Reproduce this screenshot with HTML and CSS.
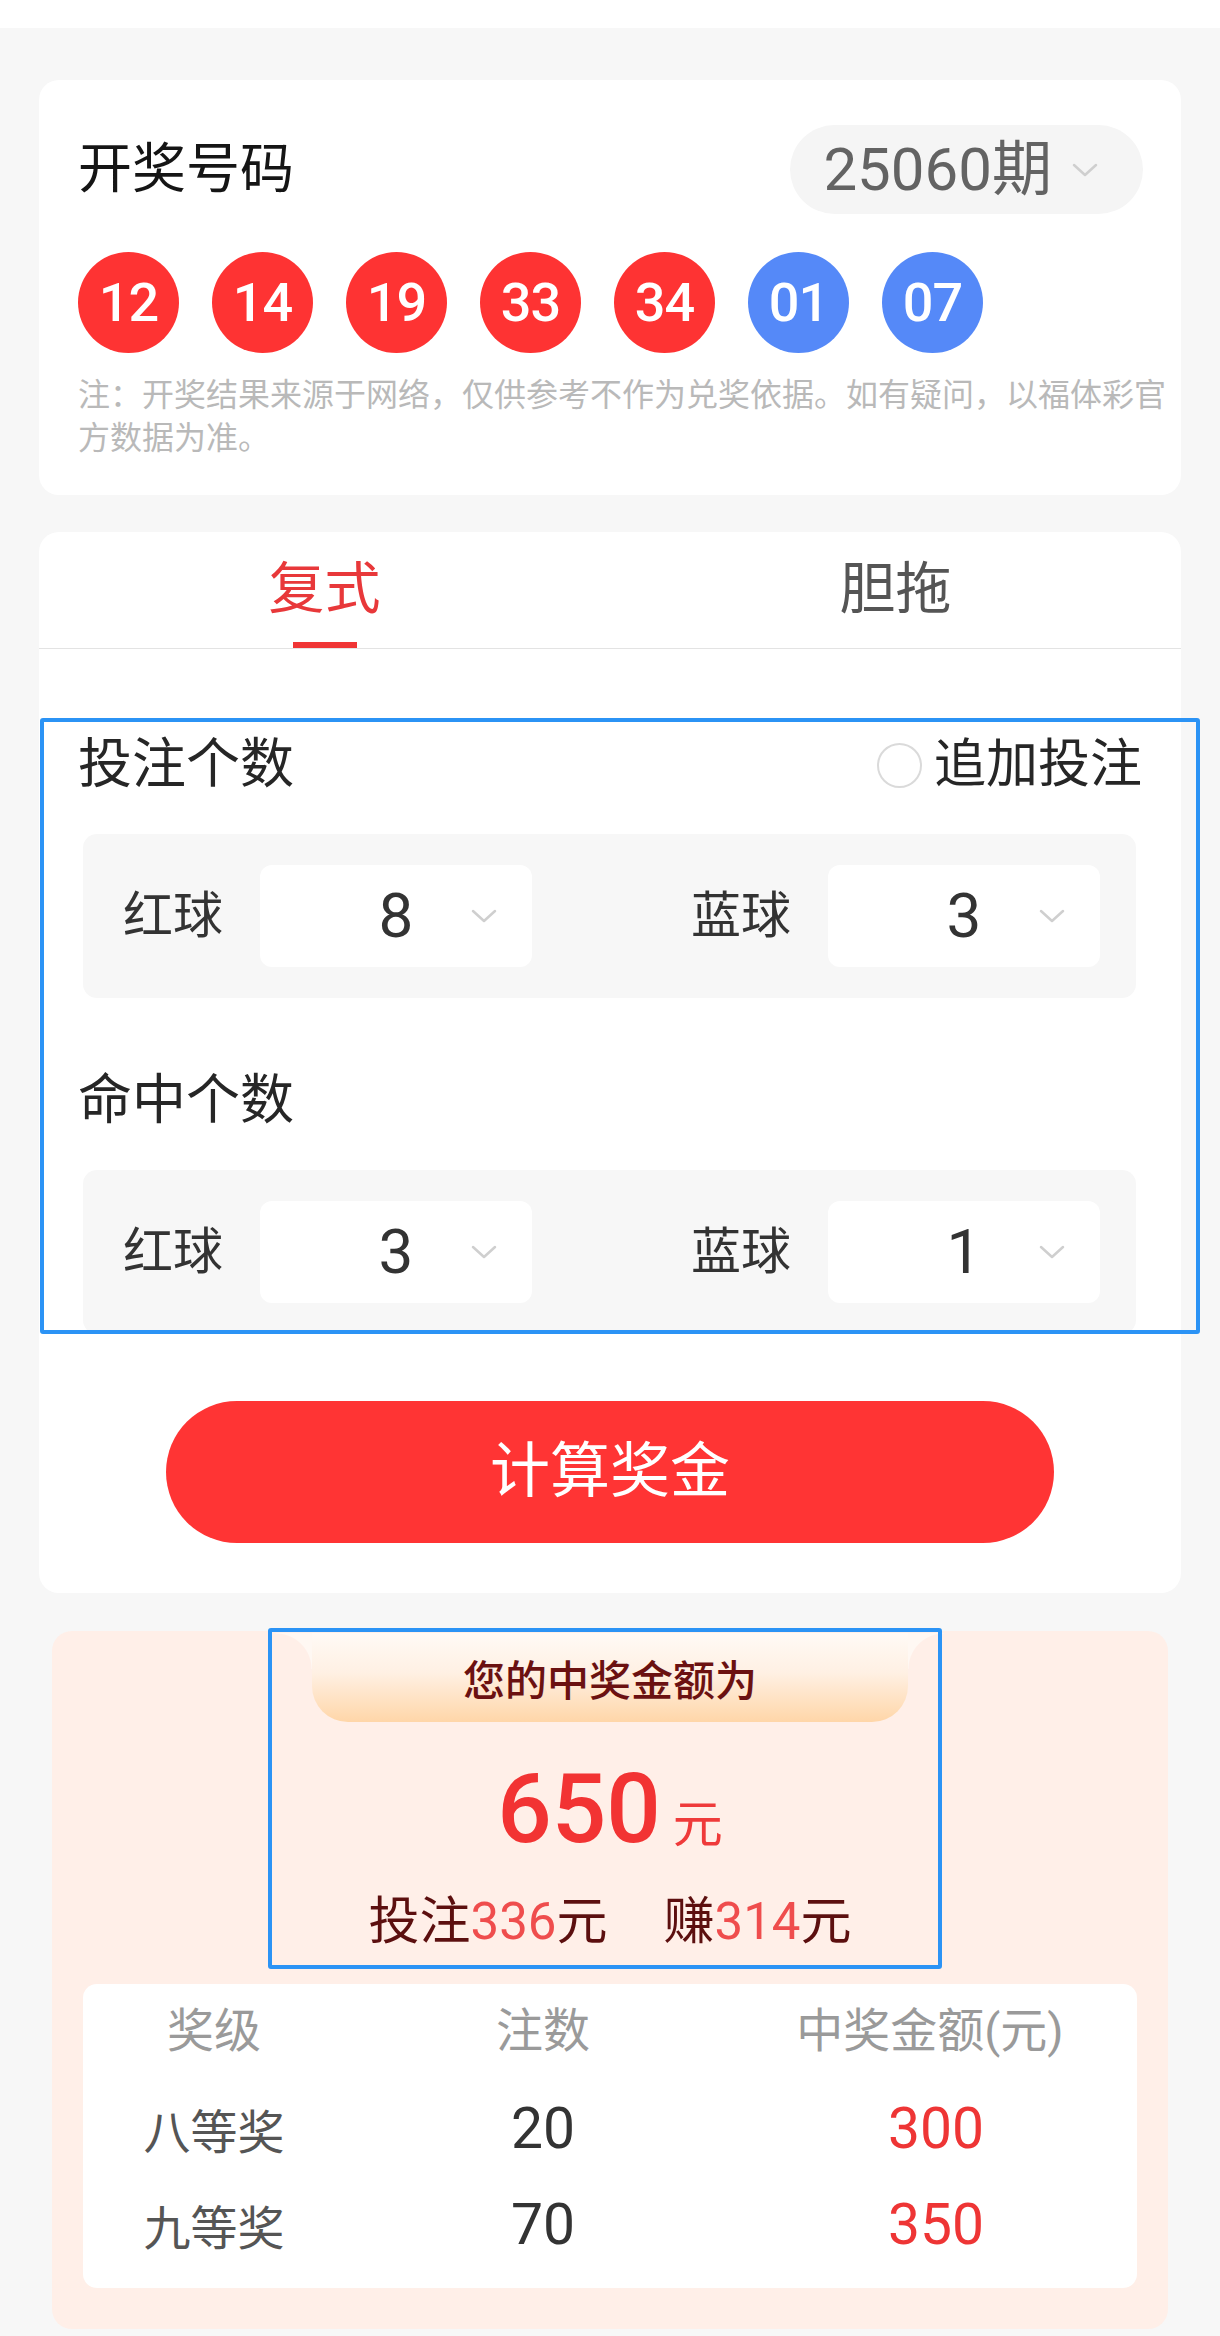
FILE: index.html
```html
<!DOCTYPE html>
<html lang="zh-CN">
<head>
<meta charset="utf-8">
<title>奖金计算</title>
<link rel="stylesheet" href="styles.css">
</head>
<body>
<div class="statusbar"></div>
<main class="content">
  <section class="card draw">
    <div class="draw-head">
      <h2 class="title">开奖号码</h2>
      <div class="period">
        <span>25060期</span>
        <svg class="chev" width="26" height="14" viewBox="0 0 26 14"><path d="M2 2 L13 12 L24 2" fill="none" stroke="#cfcfcf" stroke-width="2.5" stroke-linecap="round" stroke-linejoin="round"/></svg>
      </div>
    </div>
    <div class="balls">
      <span class="ball red">12</span>
      <span class="ball red">14</span>
      <span class="ball red">19</span>
      <span class="ball red">33</span>
      <span class="ball red">34</span>
      <span class="ball blue">01</span>
      <span class="ball blue">07</span>
    </div>
    <p class="note">注：开奖结果来源于网络，仅供参考不作为兑奖依据。如有疑问，以福体彩官方数据为准。</p>
  </section>

  <section class="card calc">
    <div class="tabs">
      <div class="tab active"><span>复式</span><i class="tab-bar"></i></div>
      <div class="tab"><span>胆拖</span></div>
    </div>

    <div class="form">
      <div class="sec-head">
        <span class="sec-title">投注个数</span>
        <div class="addon"><span class="radio"></span><span>追加投注</span></div>
      </div>
      <div class="pick-row">
        <div class="pick">
          <span class="pick-label">红球</span>
          <div class="select"><span class="num">8</span><svg class="chev" width="26" height="14" viewBox="0 0 26 14"><path d="M2 2 L13 12 L24 2" fill="none" stroke="#cfcfcf" stroke-width="2.5" stroke-linecap="round" stroke-linejoin="round"/></svg></div>
        </div>
        <div class="pick">
          <span class="pick-label">蓝球</span>
          <div class="select"><span class="num">3</span><svg class="chev" width="26" height="14" viewBox="0 0 26 14"><path d="M2 2 L13 12 L24 2" fill="none" stroke="#cfcfcf" stroke-width="2.5" stroke-linecap="round" stroke-linejoin="round"/></svg></div>
        </div>
      </div>

      <div class="sec-head second">
        <span class="sec-title">命中个数</span>
      </div>
      <div class="pick-row">
        <div class="pick">
          <span class="pick-label">红球</span>
          <div class="select"><span class="num">3</span><svg class="chev" width="26" height="14" viewBox="0 0 26 14"><path d="M2 2 L13 12 L24 2" fill="none" stroke="#cfcfcf" stroke-width="2.5" stroke-linecap="round" stroke-linejoin="round"/></svg></div>
        </div>
        <div class="pick">
          <span class="pick-label">蓝球</span>
          <div class="select"><span class="num">1</span><svg class="chev" width="26" height="14" viewBox="0 0 26 14"><path d="M2 2 L13 12 L24 2" fill="none" stroke="#cfcfcf" stroke-width="2.5" stroke-linecap="round" stroke-linejoin="round"/></svg></div>
        </div>
      </div>
      <div class="highlight hl-form"></div>
    </div>

    <button class="calc-btn" type="button">计算奖金</button>
  </section>

  <section class="result">
    <div class="result-top">
      <div class="ribbon">您的中奖金额为</div>
      <div class="amount">650<span class="unit">元</span></div>
      <div class="summary">
        <span>投注<span class="n">336</span>元</span>
        <span>赚<span class="n">314</span>元</span>
      </div>
      <div class="highlight hl-result"></div>
    </div>
    <div class="prize-table">
      <div class="prow head"><span>奖级</span><span>注数</span><span>中奖金额(元)</span></div>
      <div class="prow"><span class="lvl">八等奖</span><span class="cnt">20</span><span class="amt">300</span></div>
      <div class="prow"><span class="lvl">九等奖</span><span class="cnt">70</span><span class="amt">350</span></div>
    </div>
  </section>
</main>
</body>
</html>
```
FILE: styles.css
```css
* { box-sizing: border-box; margin: 0; padding: 0; }
html, body { background: #f7f7f7; }
body {
  font-family: Roboto, "Noto Sans CJK SC", sans-serif;
  width: 1220px;
  min-height: 2336px;
  color: #262626;
}
.statusbar { height: 28px; background: #fff; }
.content {
  padding: 52px 39px 0;
  display: flex;
  flex-direction: column;
  gap: 37px;
}
.card { background: #fff; border-radius: 20px; }

/* draw card */
.draw { padding: 45px 10px 35px 39px; }
.draw-head {
  display: flex;
  justify-content: space-between;
  align-items: center;
  margin-right: 28px;
}
.title { font-size: 54px; line-height: 60px; font-weight: 400; color: #151515; }
.period {
  height: 89px;
  padding: 0 45px 0 33px;
  border-radius: 45px;
  background: #f5f5f5;
  display: flex;
  align-items: center;
  gap: 20px;
  font-size: 60px;
  line-height: 1;
  color: #636363;
}
.balls { display: flex; gap: 33px; margin-top: 38px; }
.ball {
  width: 101px;
  height: 101px;
  border-radius: 50%;
  display: flex;
  align-items: center;
  justify-content: center;
  color: #fff;
  font-size: 54px;
  font-weight: 500;
  letter-spacing: -1px;
}
.ball.red { background: #fe3333; }
.ball.blue { background: #5589f8; }
.note { margin-top: 21px; font-size: 32px; line-height: 43px; color: #b9b9b9; }

/* calc card */
.calc { padding-bottom: 50px; }
.tabs { display: flex; height: 117px; border-bottom: 1px solid #e3e3e3; }
.tab {
  flex: 1;
  display: flex;
  flex-direction: column;
  align-items: center;
  padding-top: 27px;
  font-size: 56px;
  line-height: 60px;
  color: #555;
}
.tab.active { color: #e8383a; }
.tab-bar { margin-top: auto; width: 64px; height: 6px; background: #f03535; }

.form { position: relative; margin-top: 69px; padding: 17px 45px 0 39px; }
.sec-head {
  display: flex;
  justify-content: space-between;
  align-items: center;
  height: 60px;
  margin-right: -6px;
}
.sec-head.second { margin-top: 73px; }
.sec-title { font-size: 54px; line-height: 60px; color: #262626; }
.addon { display: flex; align-items: center; gap: 12px; font-size: 52px; line-height: 60px; color: #262626; }
.radio { width: 45px; height: 45px; border: 2px solid #dadada; border-radius: 50%; }
.pick-row {
  margin: 39px 0 0 5px;
  height: 164px;
  background: #f7f7f7;
  border-radius: 14px;
  padding: 0 36px 0 40px;
  display: flex;
  justify-content: space-between;
  align-items: center;
}
.pick { display: flex; align-items: center; gap: 37px; }
.pick-label { font-size: 50px; line-height: 60px; color: #333; }
.select {
  width: 272px;
  height: 102px;
  background: #fff;
  border-radius: 12px;
  display: grid;
  grid-template-columns: 1fr auto 1fr;
  align-items: center;
}
.select .num { grid-column: 2; font-size: 62px; line-height: 1; color: #333; }
.select .chev { grid-column: 3; justify-self: end; margin-right: 35px; }

.highlight {
  position: absolute;
  border: 4px solid #2b93f5;
  border-radius: 3px;
  pointer-events: none;
}
.hl-form { top: 0; bottom: 0; left: 1px; right: -19px; }

.calc-btn {
  display: block;
  margin: 67px auto 0;
  width: 888px;
  height: 142px;
  border: none;
  border-radius: 71px;
  background: #ff3434;
  color: #fff;
  font-family: inherit;
  font-size: 60px;
  line-height: 1;
}

/* result */
.result {
  margin: 1px 13px 0;
  background: #ffefe8;
  border-radius: 20px;
  padding: 2px 31px 41px;
}
.result-top {
  position: relative;
  display: flex;
  flex-direction: column;
  align-items: center;
}
.ribbon {
  position: relative;
  width: 596px;
  height: 89px;
  border-radius: 0 0 36px 36px;
  background: linear-gradient(180deg, #fffaf6 0%, #fff0e3 45%, #ffd6a8 100%);
  display: flex;
  align-items: center;
  justify-content: center;
  font-size: 42px;
  font-weight: 500;
  color: #6b1111;
}
.ribbon::before, .ribbon::after {
  content: "";
  position: absolute;
  top: 0;
  width: 36px;
  height: 36px;
}
.ribbon::before { left: -36px; background: radial-gradient(circle at 0 100%, transparent 35px, #fff8f3 36px); }
.ribbon::after { right: -36px; background: radial-gradient(circle at 100% 100%, transparent 35px, #fff8f3 36px); }

.amount {
  margin-top: 37px;
  height: 100px;
  font-size: 96px;
  line-height: 100px;
  font-weight: 500;
  color: #f23333;
  display: flex;
  align-items: baseline;
}
.amount .unit { font-size: 50px; line-height: 50px; margin-left: 12px; font-weight: 400; color: #ef3a3a; }
.summary {
  margin-top: 33px;
  height: 60px;
  font-size: 51px;
  line-height: 60px;
  color: #5c0f0f;
  display: flex;
  gap: 56px;
}
.summary .n { color: #ef4d4d; }
.hl-result { top: -5px; bottom: -17px; left: 185px; width: 674px; }

.prize-table {
  margin-top: 32px;
  background: #fff;
  border-radius: 14px;
  padding-bottom: 16px;
}
.prow {
  display: grid;
  grid-template-columns: 262px 396px 378px;
  height: 96px;
  align-items: center;
  text-align: center;
}
.prow.head { font-size: 47px; color: #9a9a9a; padding-bottom: 12px; }
.prow .lvl { font-size: 47px; color: #555; }
.prow .cnt { font-size: 57px; color: #333; }
.prow .amt { font-size: 57px; color: #ee3535; padding-left: 12px; }
```
